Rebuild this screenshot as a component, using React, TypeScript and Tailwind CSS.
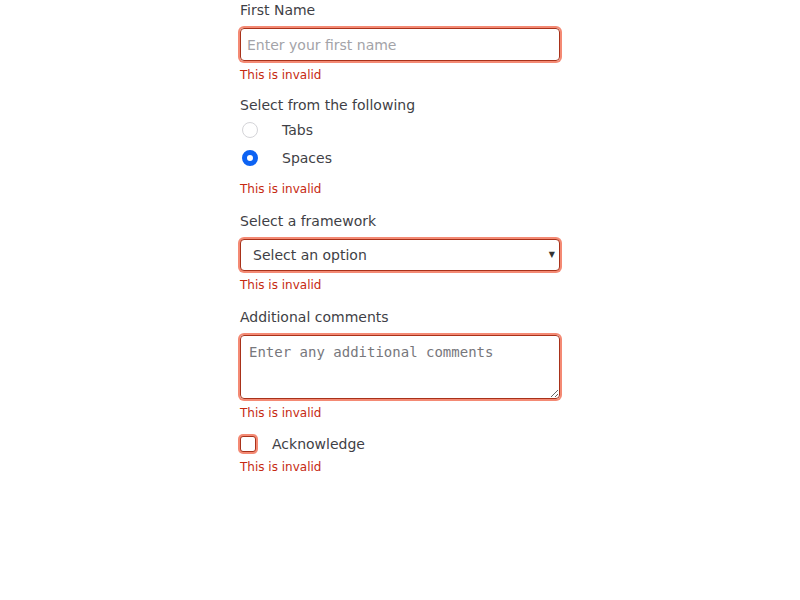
import React from 'react';

const Error = ({ className = 'mt-1.5' }: { className?: string }) => (
  <p className={`text-xs leading-4 text-[#c62a12] ${className}`}>This is invalid</p>
);

const App: React.FC = () => {
  return (
    <div className="bg-white min-h-screen font-['DejaVu_Sans',sans-serif] text-[#3f3f46]">
      <form className="w-80 mx-auto flex flex-col" onSubmit={(e) => e.preventDefault()}>
        {/* First name */}
        <div className="flex flex-col">
          <label className="text-sm leading-5">First Name</label>
          <input
            type="text"
            placeholder="Enter your first name"
            className="mt-2 h-[33px] px-[6px] text-sm rounded border border-[#a8321a] ring-2 ring-[#f48a74] outline-none placeholder:text-[#a3a3a8]"
          />
          <Error />
        </div>

        {/* Radio group */}
        <div className="flex flex-col mt-3">
          <span className="text-sm leading-5">Select from the following</span>
          <label className="flex items-center h-7 mt-px">
            <input
              type="radio"
              name="indent"
              className="appearance-none w-4 h-4 ml-0.5 rounded-full border border-[#d4d4d8] bg-white checked:border-[5px] checked:border-[#0d63f3]"
            />
            <span className="text-sm ml-6">Tabs</span>
          </label>
          <label className="flex items-center h-7">
            <input
              type="radio"
              name="indent"
              defaultChecked
              className="appearance-none w-4 h-4 ml-0.5 rounded-full border border-[#d4d4d8] bg-white checked:border-[5px] checked:border-[#0d63f3]"
            />
            <span className="text-sm ml-6">Spaces</span>
          </label>
          <Error className="mt-[9px]" />
        </div>

        {/* Select */}
        <div className="flex flex-col mt-[14px]">
          <label className="text-sm leading-5">Select a framework</label>
          <div className="relative mt-2">
            <select
              defaultValue=""
              className="appearance-none w-full h-8 pl-3 pr-6 text-sm rounded border border-[#a8321a] ring-2 ring-[#f48a74] outline-none bg-white"
            >
              <option value="" disabled>Select an option</option>
              <option value="react">React</option>
              <option value="vue">Vue</option>
              <option value="svelte">Svelte</option>
            </select>
            <span className="pointer-events-none absolute right-[5px] top-[8px] text-[8px] leading-4 text-[#333]">▼</span>
          </div>
          <Error />
        </div>

        {/* Textarea */}
        <div className="flex flex-col mt-[14px]">
          <label className="text-sm leading-5">Additional comments</label>
          <textarea
            placeholder="Enter any additional comments"
            className="mt-2 h-16 px-2 py-1.5 text-sm font-['DejaVu_Sans_Mono',monospace] rounded border border-[#a8321a] ring-2 ring-[#f48a74] outline-none placeholder:text-[#77777c]"
          />
          <Error />
        </div>

        {/* Checkbox */}
        <div className="flex flex-col mt-[13px]">
          <label className="flex items-center h-5">
            <input
              type="checkbox"
              className="appearance-none w-4 h-4 rounded-[3px] border border-[#a8321a] ring-2 ring-[#f48a74] bg-white checked:bg-[#0d63f3]"
            />
            <span className="text-sm leading-5 ml-4">Acknowledge</span>
          </label>
          <Error className="mt-[5px]" />
        </div>
      </form>
    </div>
  );
};

export default App;
